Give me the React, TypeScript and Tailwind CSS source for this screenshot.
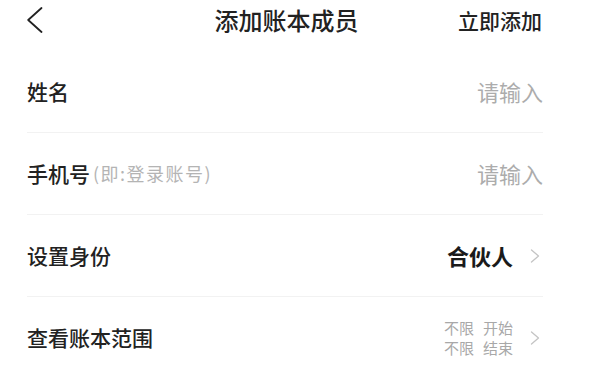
import { ReactNode } from "react";

const font = { fontFamily: '"Noto Sans CJK SC", "Noto Sans", sans-serif' };

const Chevron = () => (
  <svg width="10" height="14" viewBox="0 0 10 14" fill="none" className="shrink-0">
    <path d="M1.5 1L8.5 7L1.5 13" stroke="#c4c4c4" strokeWidth="1.3" strokeLinecap="round" strokeLinejoin="round" />
  </svg>
);

const Row = ({ label, children }: { label: ReactNode; children: ReactNode }) => (
  <div className="flex h-[82px] items-center justify-between border-b border-[#f2f2f2]">
    <div className="flex items-center">{label}</div>
    <div className="flex items-center">{children}</div>
  </div>
);

const App = () => {
  return (
    <div className="w-[596px] h-[370px] overflow-hidden bg-white text-[#222]" style={font}>
      {/* header */}
      <div className="flex h-[40px] items-center pl-[27px] pr-[54px]">
        <button className="flex h-[26px] w-[16px] items-center">
          <svg width="16" height="26" viewBox="0 0 16 26" fill="none">
            <path d="M14.5 1L1.2 13L14.5 25" stroke="#222" strokeWidth="1.8" strokeLinecap="round" strokeLinejoin="round" />
          </svg>
        </button>
        <div className="ml-[72px] flex-1 text-center text-[24px] font-medium leading-none">添加账本成员</div>
        <button className="text-[21px] font-medium leading-none text-[#222]">立即添加</button>
      </div>

      {/* form */}
      <div className="ml-[27px] mr-[53px] mt-[11px]">
        <Row label={<span className="text-[21px] font-medium">姓名</span>}>
          <span className="text-[22px] text-[#acacac]">请输入</span>
        </Row>
        <Row
          label={
            <>
              <span className="text-[21px] font-medium">手机号</span>
              <span className="ml-[3px] text-[18px] tracking-[1.5px] text-[#b4b4b4]">(即:登录账号)</span>
            </>
          }
        >
          <span className="text-[22px] text-[#acacac]">请输入</span>
        </Row>
        <Row label={<span className="text-[21px] font-medium">设置身份</span>}>
          <span className="text-[22px] font-bold text-[#1a1a1a]">合伙人</span>
          <span className="ml-[17px] mr-[3px]">
            <Chevron />
          </span>
        </Row>
        <Row label={<span className="text-[21px] font-medium">查看账本范围</span>}>
          <div className="flex flex-col items-end text-[15px] leading-[22px] text-[#a8a8a8]">
            <div className="flex gap-[9px]">
              <span>不限</span>
              <span>开始</span>
            </div>
            <div className="-mt-[2px] flex gap-[9px]">
              <span>不限</span>
              <span>结束</span>
            </div>
          </div>
          <span className="ml-[17px] mr-[3px]">
            <Chevron />
          </span>
        </Row>
      </div>
    </div>
  );
};

export default App;
